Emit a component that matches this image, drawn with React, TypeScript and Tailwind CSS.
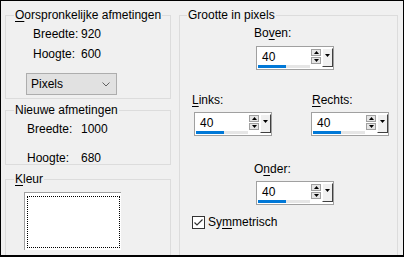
import React from 'react';

const font = { fontFamily: '"Liberation Sans", Arial, sans-serif' };

function SpinBox({ value }: { value: string }) {
  return (
    <div className="flex h-[24px] w-[78px] border border-[#a0a0a0] bg-white">
      {/* text + progress track */}
      <div className="flex w-[54px] flex-col pl-[1px]">
        <div className="h-[18px] pl-[4px] pt-[2px] text-[12px] leading-[16px] text-black">{value}</div>
        <div className="h-[3px] w-[52px] bg-[#e6e6e6]">
          <div className="h-[3px] w-[28px] bg-[#0078d7]" />
        </div>
      </div>
      {/* up / down */}
      <div className="flex flex-col pt-[2px]">
        <div className="flex h-[7px] w-[10px] items-center justify-center border border-[#a0a0a0] bg-[#e5e5e5]">
          <svg width="5" height="3" viewBox="0 0 5 3">
            <path d="M2.5 0 L5 3 L0 3 Z" fill="#000" />
          </svg>
        </div>
        <div className="mt-[1px] flex h-[7px] w-[10px] items-center justify-center border border-[#a0a0a0] bg-[#e5e5e5]">
          <svg width="5" height="3" viewBox="0 0 5 3">
            <path d="M0 0 L5 0 L2.5 3 Z" fill="#000" />
          </svg>
        </div>
      </div>
      {/* dropdown */}
      <div className="ml-[1px] mt-[1px] flex h-[19px] w-[11px] justify-center border-b border-r border-l border-t border-b-[#404040] border-l-white border-r-[#404040] border-t-white bg-[#f0f0f0] pt-[5px]">
        <svg width="5" height="3" viewBox="0 0 5 3">
          <path d="M0 0 L5 0 L2.5 3 Z" fill="#000" />
        </svg>
      </div>
    </div>
  );
}

function Legend({ children }: { children: React.ReactNode }) {
  return <legend className="whitespace-nowrap px-[1px] text-[12px] leading-[16px] text-black">{children}</legend>;
}

export default function App() {
  return (
    <div
      style={font}
      className="h-[257px] w-[404px] overflow-hidden whitespace-nowrap border border-b-2 border-black bg-[#f0f0f0] pl-[4px] pt-[6px] text-[12px] leading-[16px] text-black"
    >
      <div className="flex gap-[8px]">
        {/* left column */}
        <div className="flex w-[166px] flex-col">
          <fieldset className="h-[92px] border border-[#dcdcdc] pl-[8px]">
            <Legend>
              <span className="underline underline-offset-2">O</span>orspronkelijke afmetingen
            </Legend>
            <div className="ml-[19px] mt-[3px] flex">
              <span className="w-[48px]">Breedte:</span>
              <span>920</span>
            </div>
            <div className="ml-[19px] mt-[4px] flex">
              <span className="w-[48px]">Hoogte:</span>
              <span>600</span>
            </div>
            <div className="ml-[12px] mt-[11px] flex h-[22px] w-[91px] items-center justify-between border border-[#adadad] bg-[#e1e1e1] pl-[4px] pr-[6px]">
              <span>Pixels</span>
              <svg width="8" height="5" viewBox="0 0 8 5">
                <path d="M0.5 0.5 L4 4 L7.5 0.5" fill="none" stroke="#606060" strokeWidth="1" />
              </svg>
            </div>
          </fieldset>

          <fieldset className="mt-[3px] h-[63px] border border-[#dcdcdc] pl-[8px]">
            <Legend>Nieuwe afmetingen</Legend>
            <div className="ml-[13px] mt-[3px] flex">
              <span className="w-[54px]">Breedte:</span>
              <span>1000</span>
            </div>
            <div className="ml-[13px] mt-[13px] flex">
              <span className="w-[54px]">Hoogte:</span>
              <span>680</span>
            </div>
          </fieldset>

          <fieldset className="mt-[6px] h-[110px] border border-[#dcdcdc] pl-[8px]">
            <Legend>
              <span className="underline underline-offset-2">K</span>leur
            </Legend>
            <div className="ml-[10px] mt-[5px] h-[58px] w-[97px] border-l border-t border-[#a0a0a0] bg-white pb-[2px] pl-[2px] pr-[1px] pt-[3px]">
              <div className="h-full w-full border border-dotted border-black" />
            </div>
          </fieldset>
        </div>

        {/* right column */}
        <fieldset className="h-[270px] w-[219px] border border-[#dcdcdc] pl-[7px]">
          <Legend>Grootte in pixels</Legend>
          <div className="ml-[67px] mt-[2px]">
            Bo<span className="underline underline-offset-2">v</span>en:
          </div>
          <div className="ml-[69px] mt-[5px]">
            <SpinBox value="40" />
          </div>

          <div className="ml-[5px] mt-[22px] flex">
            <div className="flex w-[119px] flex-col">
              <div>
                <span className="underline underline-offset-2">L</span>inks:
              </div>
              <div className="ml-[2px] mt-[4px]">
                <SpinBox value="40" />
              </div>
            </div>
            <div className="flex flex-col">
              <div className="ml-[1px]">
                <span className="underline underline-offset-2">R</span>echts:
              </div>
              <div className="mt-[4px]">
                <SpinBox value="40" />
              </div>
            </div>
          </div>

          <div className="ml-[67px] mt-[25px]">
            O<span className="underline underline-offset-2">n</span>der:
          </div>
          <div className="ml-[69px] mt-[4px]">
            <SpinBox value="40" />
          </div>

          <div className="ml-[5px] mt-[9px] flex items-center">
            <div className="flex h-[13px] w-[13px] items-center justify-center border border-[#333333] bg-white">
              <svg width="11" height="11" viewBox="0 0 11 11">
                <path d="M1.5 5.5 L4 8 L9.5 2.5" fill="none" stroke="#333333" strokeWidth="1.2" />
              </svg>
            </div>
            <span className="ml-[3px]">
              Sy<span className="underline underline-offset-2">m</span>metrisch
            </span>
          </div>
        </fieldset>
      </div>
    </div>
  );
}
